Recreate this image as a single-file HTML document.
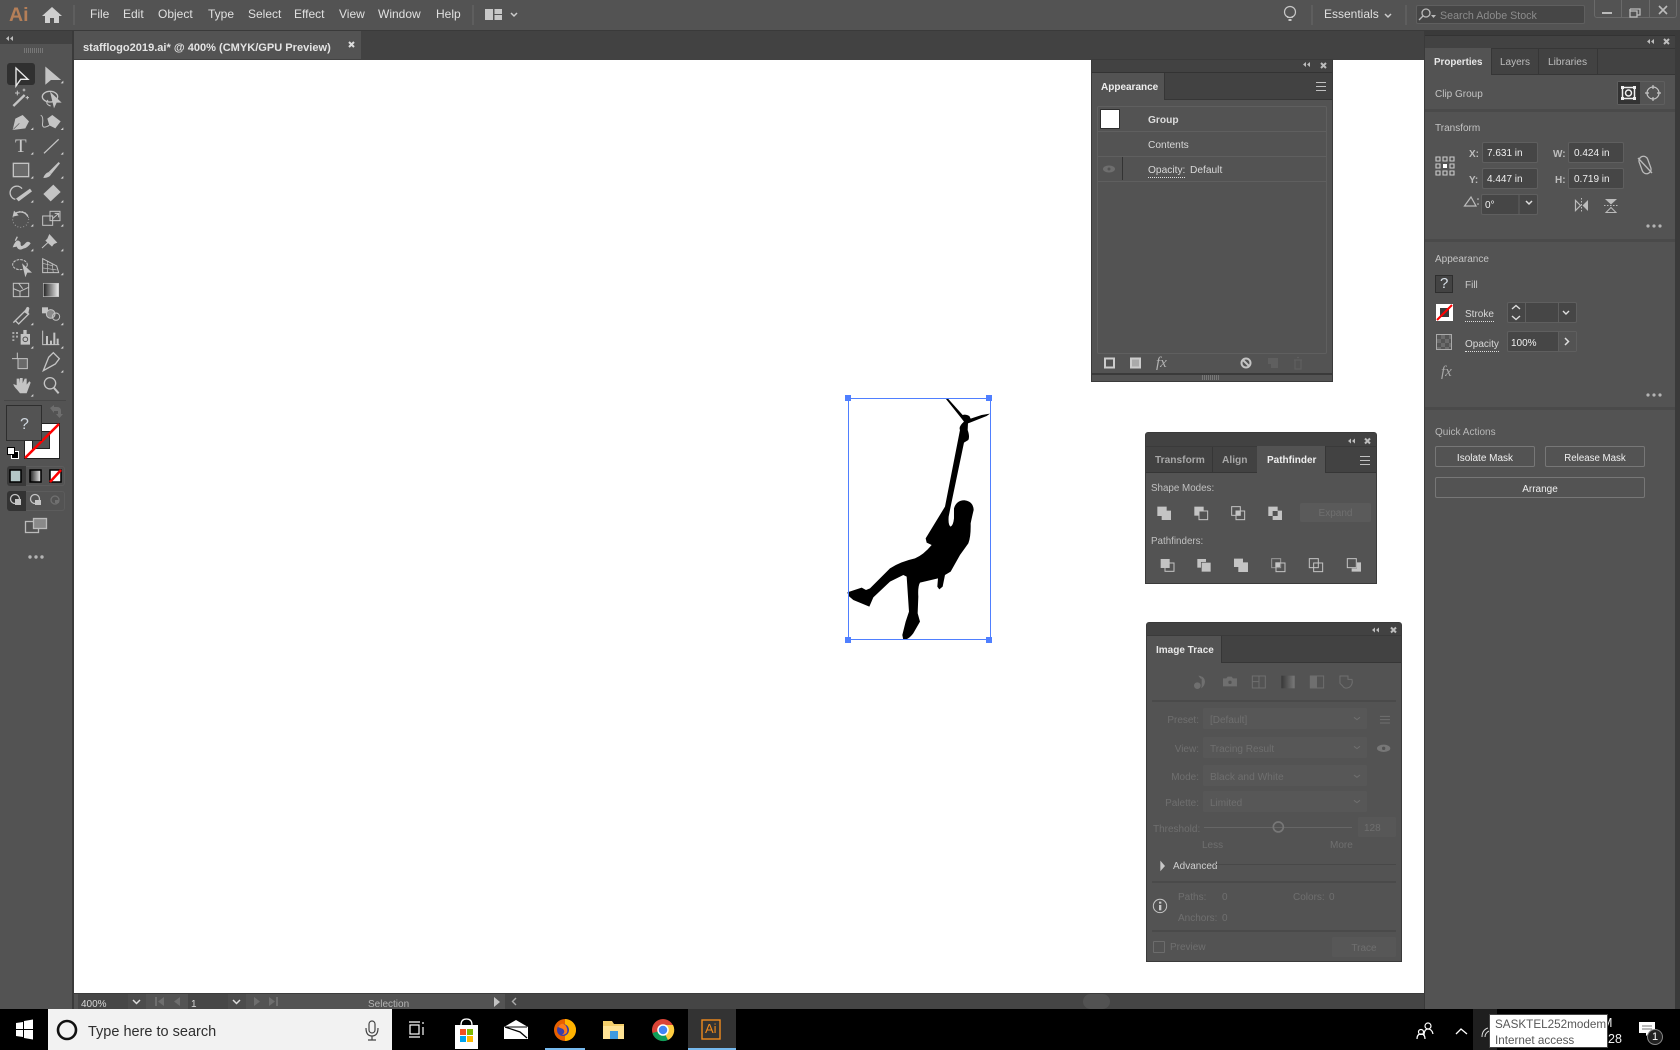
<!DOCTYPE html>
<html><head><meta charset="utf-8"><title>Illustrator</title>
<style>
html,body{margin:0;padding:0;width:1680px;height:1050px;overflow:hidden;background:#535353}
body{position:relative;font-family:"Liberation Sans",sans-serif}
.b{position:absolute;box-sizing:border-box}
.t{position:absolute;white-space:nowrap;font:10px/14px "Liberation Sans",sans-serif;color:#d8d8d8;margin-top:2px}
.w{color:#f0f0f0}.d{color:#b4b4b4}.g{color:#6f6f6f}.h{font-weight:bold}
.f{position:absolute;box-sizing:border-box;background:#464646;border:1px solid #5f5f5f;border-radius:2px}
.u{border-bottom:1px dotted #ddd;line-height:13px}
.dd{position:absolute;box-sizing:border-box;background:#575757;border-radius:1px}
.m{font-size:12px;color:#e0e0e0;margin-top:0}
svg{position:absolute;left:0;top:0}
</style></head><body>
<!-- top bar -->
<div class="b" style="left:0;top:0;width:1680px;height:30px;background:#535353"></div>
<div class="b" style="left:0;top:30px;width:1680px;height:979px;background:#3a3a3a"></div>
<div class="t h" style="left:9px;top:0;font-size:19.500px;line-height:26px;color:#b57f58">Ai</div>
<div class="b" style="left:73px;top:5px;width:2px;height:20px;background:#5e5e5e"></div>
<div class="b" style="left:472px;top:5px;width:2px;height:20px;background:#5e5e5e"></div>
<div class="t m" style="left:90px;top:7px">File</div>
<div class="t m" style="left:123px;top:7px">Edit</div>
<div class="t m" style="left:158px;top:7px">Object</div>
<div class="t m" style="left:208px;top:7px">Type</div>
<div class="t m" style="left:248px;top:7px">Select</div>
<div class="t m" style="left:294px;top:7px">Effect</div>
<div class="t m" style="left:339px;top:7px">View</div>
<div class="t m" style="left:378px;top:7px">Window</div>
<div class="t m" style="left:436px;top:7px">Help</div>
<div class="b" style="left:1311px;top:5px;width:2px;height:20px;background:#5e5e5e"></div>
<div class="b" style="left:1405px;top:5px;width:2px;height:20px;background:#5e5e5e"></div>
<div class="t m" style="left:1324px;top:7px">Essentials</div>
<div class="b" style="left:1416px;top:5px;width:169px;height:19px;background:#464646;border:1px solid #5f5f5f;border-radius:2px"></div>
<div class="t" style="left:1440px;top:7px;font-size:10.700px;color:#8c8c8c">Search Adobe Stock</div>
<div class="b" style="left:1594px;top:-1px;width:83px;height:19px;border:1px solid #6a6a6a;border-radius:0 0 3px 3px"></div>
<div class="b" style="left:1621px;top:0;width:1px;height:18px;background:#6a6a6a"></div>
<div class="b" style="left:1649px;top:0;width:1px;height:18px;background:#6a6a6a"></div>

<!-- document tab area -->
<div class="b" style="left:74px;top:31px;width:1350px;height:29px;background:#424242"></div>
<div class="b" style="left:74px;top:31px;width:287px;height:28px;background:#535353"></div>
<div class="t h" style="left:83px;top:39px;font-size:11.050px;color:#e4e4e4">stafflogo2019.ai* @ 400% (CMYK/GPU Preview)</div>

<!-- canvas -->
<div class="b" style="left:74px;top:60px;width:1350px;height:933px;background:#fff"></div>

<!-- status bar -->
<div class="b" style="left:74px;top:993px;width:1350px;height:16px;background:#535353;border-top:1px solid #3c3c3c"></div>
<div class="b" style="left:505px;top:994px;width:919px;height:15px;background:#454545"></div>
<div class="b" style="left:1083px;top:994px;width:27px;height:15px;border-radius:8px;background:#525252"></div>
<div class="b" style="left:78px;top:994px;width:50px;height:15px;background:#464646"></div>
<div class="b" style="left:128px;top:994px;width:18px;height:15px;background:#4c4c4c"></div>
<div class="b" style="left:188px;top:994px;width:40px;height:15px;background:#464646"></div>
<div class="b" style="left:228px;top:994px;width:18px;height:15px;background:#4c4c4c"></div>
<div class="t" style="left:81px;top:996px;font-size:10px;line-height:13px">400%</div>
<div class="t" style="left:191px;top:996px;font-size:10px;line-height:13px">1</div>
<div class="t d" style="left:368px;top:996px;font-size:10px;line-height:13px">Selection</div>

<!-- left tools panel -->
<div class="b" style="left:0;top:31px;width:72px;height:978px;background:#535353"></div>
<div class="b" style="left:0;top:31px;width:72px;height:13px;background:#424242"></div>
<div class="b" style="left:7px;top:63px;width:28px;height:22px;background:#303030;border-radius:3px"></div>
<div class="b" style="left:4px;top:400px;width:62px;height:1px;background:#474747"></div>
<div class="b" style="left:7px;top:466px;width:58px;height:20px;border:1px solid #5c5c5c;border-radius:3px"></div>
<div class="b" style="left:7px;top:466px;width:19px;height:20px;background:#3a3a3a;border-radius:3px 0 0 3px"></div>
<div class="b" style="left:7px;top:491px;width:58px;height:20px;border:1px solid #5c5c5c;border-radius:3px"></div>
<div class="b" style="left:7px;top:491px;width:19px;height:20px;background:#333;border-radius:3px 0 0 3px"></div>
<div class="t" style="left:15px;top:136px;font:19px/22px 'Liberation Serif',serif;color:#c8c8c8;margin:0">T</div>

<!-- stroke swatch / fill swatch -->
<div class="b" style="left:24px;top:423px;width:36px;height:36px;background:#fff;border:1px solid #222"></div>
<div class="b" style="left:32px;top:431px;width:18px;height:18px;background:#535353;border:1px solid #222"></div>
<svg width="1680" height="1050" viewBox="0 0 1680 1050" style="pointer-events:none"><line x1="25" y1="458" x2="59" y2="424" stroke="#f00" stroke-width="2.600"/></svg>
<div class="b" style="left:6px;top:405px;width:36px;height:36px;background:#535353;border:1px solid #2e2e2e"></div>
<div class="t" style="left:20px;top:415px;font-size:16px;line-height:16px;color:#d0d8e0">?</div>

<!-- right panel -->
<div class="b" style="left:1424px;top:35px;width:252px;height:974px;background:#535353;border-left:1px solid #3a3a3a;border-right:1px solid #3a3a3a"></div>
<div class="b" style="left:1425px;top:35px;width:250px;height:13px;background:#424242;border-top:1px solid #333"></div>
<div class="b" style="left:1425px;top:48px;width:250px;height:27px;background:#424242;border-top:1px solid #363636;border-bottom:1px solid #363636"></div>
<div class="b" style="left:1425px;top:48px;width:66px;height:27px;background:#535353"></div>
<div class="b" style="left:1491px;top:48px;width:1px;height:27px;background:#363636"></div>
<div class="b" style="left:1538px;top:48px;width:1px;height:27px;background:#363636"></div>
<div class="b" style="left:1597px;top:48px;width:1px;height:27px;background:#363636"></div>
<div class="t h" style="left:1434px;top:54px;color:#e8e8e8;font-size:9.800px">Properties</div>
<div class="t" style="left:1500px;top:54px;color:#bdbdbd">Layers</div>
<div class="t" style="left:1548px;top:54px;color:#bdbdbd;font-size:10.200px">Libraries</div>
<div class="t" style="left:1435px;top:86px;color:#c4c4c4">Clip Group</div>
<div class="b" style="left:1617px;top:81px;width:48px;height:24px;border:1px solid #5f5f5f;border-radius:2px"></div>
<div class="b" style="left:1618px;top:82px;width:22px;height:22px;background:#333"></div>
<div class="b" style="left:1425px;top:109px;width:250px;height:3px;background:#4a4a4a"></div>
<div class="t" style="left:1435px;top:120px;color:#c4c4c4">Transform</div>
<div class="t h" style="left:1469px;top:146px;color:#bdbdbd">X:</div>
<div class="t h" style="left:1469px;top:172px;color:#bdbdbd">Y:</div>
<div class="t h" style="left:1553px;top:146px;color:#bdbdbd">W:</div>
<div class="t h" style="left:1555px;top:172px;color:#bdbdbd">H:</div>
<div class="f" style="left:1482px;top:142px;width:56px;height:21px"></div>
<div class="f" style="left:1482px;top:168px;width:56px;height:21px"></div>
<div class="f" style="left:1568px;top:142px;width:56px;height:21px"></div>
<div class="f" style="left:1568px;top:168px;width:56px;height:21px"></div>
<div class="f" style="left:1481px;top:194px;width:57px;height:21px"></div>
<div class="b" style="left:1518px;top:195px;width:2px;height:19px;background:#535353"></div>
<div class="t w" style="left:1487px;top:145px">7.631 in</div>
<div class="t w" style="left:1487px;top:171px">4.447 in</div>
<div class="t w" style="left:1574px;top:145px">0.424 in</div>
<div class="t w" style="left:1574px;top:171px">0.719 in</div>
<div class="t w" style="left:1485px;top:197px">0°</div>
<div class="b" style="left:1425px;top:239px;width:250px;height:3px;background:#4a4a4a"></div>
<div class="t" style="left:1435px;top:251px;color:#c4c4c4">Appearance</div>
<div class="b" style="left:1435px;top:275px;width:18px;height:18px;background:#434343;border:1px solid #2e2e2e"></div>
<div class="t" style="left:1440px;top:274px;font-size:15px;line-height:16px;color:#d8e0e8">?</div>
<div class="t" style="left:1465px;top:277px;color:#c8c8c8">Fill</div>
<div class="t u" style="left:1465px;top:306px">Stroke</div>
<div class="t u" style="left:1465px;top:336px">Opacity</div>
<div class="b" style="left:1436px;top:304px;width:17px;height:17px;background:#fff"></div>
<div class="b" style="left:1440px;top:308px;width:9px;height:9px;background:#3a3a3a"></div>
<div class="f" style="left:1507px;top:302px;width:70px;height:21px"></div>
<div class="b" style="left:1525px;top:303px;width:1px;height:19px;background:#5f5f5f"></div>
<div class="b" style="left:1558px;top:303px;width:1px;height:19px;background:#5f5f5f"></div>
<div class="f" style="left:1507px;top:331px;width:70px;height:21px"></div>
<div class="b" style="left:1558px;top:332px;width:18px;height:19px;background:#535353;border-left:1px solid #5f5f5f"></div>
<div class="t w" style="left:1511px;top:335px">100%</div>
<div class="b" style="left:1436px;top:334px;width:16px;height:16px;background:repeating-conic-gradient(#6c6c6c 0 25%,#555 0 50%) 0 0/8px 8px;border:1px solid #aaa"></div>
<div class="t" style="left:1441px;top:364px;font:italic 15px/16px 'Liberation Serif',serif;color:#a8a8a8;margin:0">fx</div>
<div class="b" style="left:1425px;top:407px;width:250px;height:3px;background:#4a4a4a"></div>
<div class="t" style="left:1435px;top:424px;color:#b8b8b8">Quick Actions</div>
<div class="b" style="left:1435px;top:446px;width:100px;height:21px;border:1px solid #777;border-radius:2px"></div>
<div class="b" style="left:1545px;top:446px;width:100px;height:21px;border:1px solid #777;border-radius:2px"></div>
<div class="b" style="left:1435px;top:477px;width:210px;height:21px;border:1px solid #777;border-radius:2px"></div>
<div class="t w" style="left:1435px;top:450px;width:100px;text-align:center">Isolate Mask</div>
<div class="t w" style="left:1545px;top:450px;width:100px;text-align:center;font-size:9.700px">Release Mask</div>
<div class="t w" style="left:1435px;top:481px;width:210px;text-align:center">Arrange</div>

<!-- Appearance panel -->
<div class="b" style="left:1091px;top:59px;width:242px;height:323px;background:#535353;border:1px solid #3a3a3a"></div>
<div class="b" style="left:1092px;top:60px;width:240px;height:40px;background:#424242"></div>
<div class="b" style="left:1092px;top:72px;width:240px;height:1px;background:#333"></div>
<div class="b" style="left:1092px;top:73px;width:73px;height:27px;background:#535353;border-right:1px solid #363636"></div>
<div class="b" style="left:1165px;top:99px;width:167px;height:1px;background:#363636"></div>
<div class="t h" style="left:1101px;top:79px;color:#eee;font-size:10px">Appearance</div>
<div class="b" style="left:1097px;top:106px;width:230px;height:248px;border:1px solid #5f5f5f;border-radius:2px"></div>
<div class="b" style="left:1098px;top:131px;width:228px;height:1px;background:#5f5f5f"></div>
<div class="b" style="left:1098px;top:156px;width:228px;height:1px;background:#5f5f5f"></div>
<div class="b" style="left:1098px;top:181px;width:228px;height:1px;background:#5f5f5f"></div>
<div class="b" style="left:1100px;top:109px;width:20px;height:20px;background:#fff;border:1px solid #2e2e2e;border-radius:1px"></div>
<div class="b" style="left:1122px;top:157px;width:1px;height:23px;background:#333"></div>
<div class="t h" style="left:1148px;top:112px;font-size:10.200px;color:#ddd">Group</div>
<div class="t" style="left:1148px;top:137px;font-size:10.200px">Contents</div>
<div class="t u" style="left:1148px;top:162px;font-size:10.200px;">Opacity:</div>
<div class="t" style="left:1190px;top:162px;font-size:10.200px">Default</div>
<div class="t" style="left:1156px;top:355px;font:italic 15px/16px 'Liberation Serif',serif;color:#b4b4b4;margin:0">fx</div>
<div class="b" style="left:1092px;top:373px;width:240px;height:2px;background:#3a3a3a"></div>

<!-- Pathfinder panel -->
<div class="b" style="left:1145px;top:432px;width:232px;height:152px;background:#535353;border:1px solid #3a3a3a;border-radius:3px 3px 0 0"></div>
<div class="b" style="left:1146px;top:433px;width:230px;height:40px;background:#424242;border-radius:2px 2px 0 0"></div>
<div class="b" style="left:1146px;top:446px;width:230px;height:1px;background:#3a3a3a"></div>
<div class="b" style="left:1146px;top:472px;width:230px;height:1px;background:#363636"></div>
<div class="b" style="left:1212px;top:447px;width:1px;height:26px;background:#363636"></div>
<div class="b" style="left:1257px;top:446px;width:69px;height:27px;background:#535353;border-right:1px solid #363636"></div>
<div class="t h" style="left:1155px;top:452px;font-size:10.200px;color:#a8a8a8">Transform</div>
<div class="t h" style="left:1222px;top:452px;font-size:10.200px;color:#a8a8a8">Align</div>
<div class="t h" style="left:1267px;top:452px;font-size:10px;color:#eee">Pathfinder</div>
<div class="t" style="left:1151px;top:480px;font-size:9.800px;color:#c0c0c0">Shape Modes:</div>
<div class="t" style="left:1151px;top:533px;font-size:9.800px;color:#c0c0c0">Pathfinders:</div>
<div class="b" style="left:1300px;top:503px;width:71px;height:19px;background:#5a5a5a;border-radius:2px"></div>
<div class="t g" style="left:1300px;top:505px;width:71px;text-align:center;font-size:10px">Expand</div>

<!-- Image Trace panel -->
<div class="b" style="left:1146px;top:622px;width:256px;height:340px;background:#535353;border:1px solid #3a3a3a;border-radius:3px 3px 0 0"></div>
<div class="b" style="left:1147px;top:623px;width:254px;height:40px;background:#424242;border-radius:2px 2px 0 0"></div>
<div class="b" style="left:1147px;top:635px;width:254px;height:1px;background:#3a3a3a"></div>
<div class="b" style="left:1147px;top:636px;width:75px;height:27px;background:#535353;border-right:1px solid #363636"></div>
<div class="b" style="left:1222px;top:662px;width:179px;height:1px;background:#363636"></div>
<div class="t h" style="left:1156px;top:642px;font-size:10px;color:#e8e8e8">Image Trace</div>
<div class="b" style="left:1152px;top:700px;width:244px;height:2px;background:#4a4a4a"></div>
<div class="dd" style="left:1203px;top:708px;width:164px;height:21px"></div>
<div class="dd" style="left:1203px;top:737px;width:164px;height:21px"></div>
<div class="dd" style="left:1203px;top:765px;width:164px;height:21px"></div>
<div class="dd" style="left:1203px;top:791px;width:164px;height:21px"></div>
<div class="t g" style="right:481px;top:712px">Preset:</div>
<div class="t g" style="right:481px;top:741px">View:</div>
<div class="t g" style="right:481px;top:769px">Mode:</div>
<div class="t g" style="right:481px;top:795px">Palette:</div>
<div class="t g" style="left:1210px;top:712px;">[Default]</div>
<div class="t g" style="left:1210px;top:741px;">Tracing Result</div>
<div class="t g" style="left:1210px;top:769px;font-size:10.200px">Black and White</div>
<div class="t g" style="left:1210px;top:795px;">Limited</div>
<div class="t g" style="left:1153px;top:821px;">Threshold:</div>
<div class="b" style="left:1204px;top:827px;width:148px;height:1px;background:#666"></div>
<div class="dd" style="left:1358px;top:817px;width:38px;height:20px"></div>
<div class="t g" style="left:1364px;top:820px;">128</div>
<div class="t g" style="left:1202px;top:837px;">Less</div>
<div class="t g" style="left:1330px;top:837px;">More</div>
<div class="t" style="left:1173px;top:858px;color:#cfcfcf">Advanced</div>
<div class="b" style="left:1216px;top:864px;width:180px;height:1px;background:#484848"></div>
<div class="b" style="left:1152px;top:881px;width:244px;height:2px;background:#4a4a4a"></div>
<div class="t g" style="left:1178px;top:889px;">Paths:</div>
<div class="t g" style="left:1222px;top:889px;">0</div>
<div class="t g" style="left:1293px;top:889px;">Colors:</div>
<div class="t g" style="left:1329px;top:889px;">0</div>
<div class="t g" style="left:1178px;top:910px;">Anchors:</div>
<div class="t g" style="left:1222px;top:910px;">0</div>
<div class="b" style="left:1152px;top:930px;width:244px;height:2px;background:#4a4a4a"></div>
<div class="b" style="left:1153px;top:941px;width:12px;height:12px;border:1px solid #6c6c6c;border-radius:1px"></div>
<div class="t g" style="left:1170px;top:939px;">Preview</div>
<div class="dd" style="left:1332px;top:937px;width:64px;height:20px"></div>
<div class="t g" style="left:1332px;top:940px;width:64px;text-align:center;">Trace</div>

<!-- taskbar -->
<div class="b" style="left:0;top:1009px;width:1680px;height:41px;background:#000"></div>
<div class="b" style="left:48px;top:1009px;width:344px;height:41px;background:#f2f2f2"></div>
<div class="t" style="left:88px;top:1021px;font-size:14.500px;line-height:18px;color:#2f2f2f">Type here to search</div>
<div class="b" style="left:688px;top:1009px;width:48px;height:41px;background:#333"></div>
<div class="b" style="left:545px;top:1048px;width:40px;height:2px;background:#76b9ed"></div>
<div class="b" style="left:688px;top:1048px;width:48px;height:2px;background:#76b9ed"></div>
<div class="b" style="left:1473px;top:1009px;width:24px;height:41px;background:#1f1f1f"></div>
<div class="t w" style="left:1602px;top:1013px;font-size:12.500px;line-height:16px">M</div>
<div class="t w" style="left:1608px;top:1029px;font-size:12.500px;line-height:16px">28</div>
<div class="b" style="left:1489px;top:1014px;width:119px;height:34px;background:#fff;border:1px solid #444"></div>
<div class="t" style="left:1495px;top:1015px;font-size:11.700px;line-height:15px;color:#575757">SASKTEL252modem</div>
<div class="t" style="left:1495px;top:1031px;font-size:11.700px;line-height:15px;color:#575757">Internet access</div>
<div class="t" style="left:705px;top:1020px;font-size:13px;line-height:18px;color:#f08a1d;margin:0">Ai</div>

<!-- icon overlay -->
<svg width="1680" height="1050" viewBox="0 0 1680 1050">
<defs><linearGradient id="gr"><stop offset="0" stop-color="#222"/><stop offset="1" stop-color="#eee"/></linearGradient>
<linearGradient id="gr2"><stop offset="0" stop-color="#383838"/><stop offset="1" stop-color="#7a7a7a"/></linearGradient></defs>
<!-- top bar icons -->
<path d="M52 7l-10 9h3v7h5v-5h4v5h5v-7h3z" fill="#cfcfcf"/>
<path d="M485 9h8v11h-8zM494.500 9h7.500v5h-7.500zM494.500 15h7.500v5h-7.500z" fill="#c8c8c8"/>
<path d="M511 13l3 3 3-3" fill="none" stroke="#ccc" stroke-width="1.500"/>
<path d="M349 42l5 5M354 42l-5 5" stroke="#ddd" stroke-width="2"/>
<g fill="none" stroke="#c8c8c8" stroke-width="1.200"><circle cx="1290" cy="12" r="5.500"/><path d="M1288 18l-.5-2M1292 18l.5-2"/><path d="M1288.500 20h3" stroke-width="2"/></g>
<path d="M1385 14l3 3 3-3" fill="none" stroke="#ccc" stroke-width="1.500"/>
<g fill="none" stroke="#bbb" stroke-width="1.300"><circle cx="1426" cy="13" r="4"/><path d="M1423 16l-4 4"/></g><path d="M1431 15h5l-2.500 3z" fill="#bbb"/>
<path d="M1602 12h10v2h-10z" fill="#bbb"/>
<g fill="none" stroke="#bbb" stroke-width="1.300"><path d="M1630 9h10v6h-3M1630 9v2"/><rect x="1630" y="11" width="7" height="6"/></g>
<path d="M1659 6l8 8M1667 6l-8 8" stroke="#bbb" stroke-width="1.600"/>

<!-- panel collapse & close glyphs -->
<g fill="#bdbdbd">
<path d="M9 36l-3 2.500 3 2.500zM13 36l-3 2.500 3 2.500z"/>
<path d="M1306 62l-3 2.500 3 2.500zM1310 62l-3 2.500 3 2.500z"/>
<path d="M1351 438.500l-3 2.500 3 2.500zM1355 438.500l-3 2.500 3 2.500z"/>
<path d="M1375 627.500l-3 2.500 3 2.500zM1379 627.500l-3 2.500 3 2.500z"/>
<path d="M1650 39l-3 2.500 3 2.500zM1654 39l-3 2.500 3 2.500z"/>
</g>
<g stroke="#bdbdbd" stroke-width="2" fill="none">
<path d="M1321 63l5 5M1326 63l-5 5"/><path d="M1365 438.500l5 5M1370 438.500l-5 5"/><path d="M1391 627.500l5 5M1396 627.500l-5 5"/><path d="M1664 39l5 5M1669 39l-5 5"/>
</g>
<g stroke="#c0c0c0" stroke-width="1"><path d="M1316 82.500h10M1316 86.500h10M1316 90.500h10"/><path d="M1360 456.500h10M1360 460.500h10M1360 464.500h10"/></g>
<path d="M24.500 48v5M26.500 48v5M28.500 48v5M30.500 48v5M32.500 48v5M34.500 48v5M36.500 48v5M38.500 48v5M40.500 48v5M42.500 48v5" stroke="#777" stroke-width="1"/>
<path d="M1202.500 375v5M1204.500 375v5M1206.500 375v5M1208.500 375v5M1210.500 375v5M1212.500 375v5M1214.500 375v5M1216.500 375v5M1218.500 375v5" stroke="#777"/>

<!-- TOOLBOX in zoom coordinates -->
<g transform="translate(0,50) scale(.3333)" fill="none" stroke="#c4c4c4" stroke-width="4">
<path d="M48 54V108L62 88H84Z" stroke="#ececec"/>
<path d="M138 54V100L152 88H178Z" fill="#c4c4c4"/>
<path d="M40 168L74 135" stroke-width="7"/><path d="M52 122v14M45 129h14M82 138v10M77 143h10M72 116v8M68 120h8" stroke-width="3"/>
<ellipse cx="150" cy="140" rx="23" ry="16"/><path d="M152 168q-18-6-8-18" stroke-width="3"/><path d="M150 125L185 158H170L162 175Z" fill="#c4c4c4" stroke="none"/>
<path d="M38 240L46 206L68 195L87 214L76 235Z" fill="#c4c4c4" stroke="none"/><path d="M40 238L58 220" stroke="#535353" stroke-width="2"/>
<path d="M142 206L157 195L182 214L166 235L148 226Z" fill="#c4c4c4" stroke="none"/><path d="M148 226Q124 240 128 218Q130 198 122 196" stroke-width="3"/>
<path d="M132 310L176 268" stroke-width="4"/>
<rect x="40" y="340" width="46" height="40" fill="#6a6a6a"/>
<path d="M176 336L146 366L154 372L180 340Z" fill="#c4c4c4" stroke="none"/><path d="M146 366Q134 370 130 384Q148 384 154 372Z" fill="#c4c4c4" stroke="none"/>
<path d="M66 416A20 20 0 1 0 46 448" stroke-width="4"/><path d="M48 446L90 416L96 424L56 454Z" fill="#c4c4c4" stroke="none"/>
<path d="M130 432L160 404L182 426L152 454Z" fill="#c4c4c4" stroke="none"/>
<path d="M40 498A25 25 0 0 1 84 500" stroke-width="4"/><path d="M42 482L38 500L56 496Z" fill="#c4c4c4" stroke="none"/><circle cx="62" cy="508" r="24" stroke-dasharray="2 7" stroke-width="3"/>
<rect x="128" y="498" width="30" height="28" stroke-width="3"/><rect x="150" y="484" width="30" height="28" stroke-width="3" fill="none"/><path d="M158 506L176 490M164 490h12v12" stroke-width="3"/>
<path d="M38 592Q50 560 62 578Q60 596 74 582Q84 570 92 580Q82 594 70 596Q56 604 50 590" fill="#c4c4c4" stroke="none"/><path d="M52 560l-6 12" stroke-width="4"/>
<path d="M126 594L150 572" stroke-width="3"/><path d="M148 552L172 578L162 582L156 590L136 572L142 566Z" fill="#c4c4c4" stroke="none"/>
<ellipse cx="60" cy="644" rx="22" ry="15" stroke-width="3" stroke-dasharray="8 3"/><path d="M66 640L96 668H82L76 682Z" fill="#c4c4c4" stroke="none"/>
<path d="M128 626L170 648L176 668H128Z" stroke-width="3"/><path d="M128 640L160 648M128 654L170 660M142 632V668M156 640L160 668" stroke-width="2"/>
<rect x="40" y="700" width="46" height="40" stroke-width="3"/><path d="M40 716L60 724L86 712M60 724L60 740M56 700L68 716" stroke-width="3"/>
<rect x="130" y="700" width="46" height="40" fill="url(#gr)" stroke-width="2"/>
<path d="M46 812L40 818M46 812L76 782L86 792L56 822Z" stroke-width="4"/><path d="M72 786L80 772Q86 768 88 776L84 794Z" fill="#c4c4c4" stroke="none"/>
<rect x="126" y="772" width="18" height="18" fill="#c4c4c4" stroke="none"/><circle cx="152" cy="792" r="13" fill="#8a8a8a" stroke-width="3"/><circle cx="168" cy="800" r="11" stroke-width="3"/>
<path d="M37 846h6v6h-6zM48 846h6v6h-6zM37 857h6v6h-6zM48 857h6v6h-6zM37 868h6v5h-6z" fill="#aaa" stroke="none"/>
<rect x="62" y="852" width="28" height="32" fill="#c4c4c4" stroke="none"/><rect x="70" y="840" width="10" height="12" fill="#c4c4c4" stroke="none"/><circle cx="76" cy="868" r="7" stroke="#535353" stroke-width="3"/>
<path d="M128 842V884H178" stroke-width="3"/><path d="M138 858h6v26h-6zM150 872h6v12h-6zM160 848h6v36h-6zM170 866h6v18h-6z" fill="#c4c4c4" stroke="none"/>
<path d="M36 926H54M52 908V926" stroke-width="3"/><path d="M54 926H82V956H54Z" fill="#6a6a6a" stroke-width="3"/>
<path d="M130 962L146 922L160 908L178 926L166 942Z" stroke-width="4"/>
<path d="M52 1020Q40 1008 40 1002L50 1006L50 986H58V1000L60 984H68V1000L74 986H80V1004L88 994L92 998L80 1030H60Z" fill="#c4c4c4" stroke="none"/>
<circle cx="150" cy="1000" r="17" stroke-width="4"/><path d="M162 1014L176 1030" stroke-width="6"/>
<g fill="#d0d0d0" stroke="none">
<path d="M190 92v8h-8zM100 232v8h-8zM190 232v8h-8zM100 306v8h-8zM190 306v8h-8zM100 378v8h-8zM190 378v8h-8zM100 450v8h-8zM190 450v8h-8zM100 522v8h-8zM190 522v8h-8zM100 596v8h-8zM190 596v8h-8zM190 668v8h-8zM100 818v8h-8zM190 818v8h-8zM100 888v8h-8zM190 888v8h-8zM190 960v8h-8zM100 1032v8h-8z"/>
</g>
</g>
<!-- swap arrow, default colors -->
<path transform="translate(-2,-4)" d="M52 412l4-3v2h3q4 0 4 4v3h2l-3.500 4-3.500-4h2v-3h-4v2z" fill="#6e6e6e"/>
<rect x="11.500" y="451.500" width="7" height="7" fill="#000" stroke="#fff"/><rect x="7.500" y="447.500" width="7" height="7" fill="#fff" stroke="#000"/>
<!-- mode swatches -->
<rect x="10" y="470" width="11" height="12" fill="#b4c8c8" stroke="#000" stroke-width="1.500"/>
<rect x="30" y="470" width="11" height="12" fill="url(#gr)" stroke="#000" stroke-width="1.500"/>
<rect x="50" y="470" width="11" height="12" fill="#fff" stroke="#000" stroke-width="1.500"/><path d="M50 482L61 470" stroke="#f00" stroke-width="2.500"/>
<!-- draw modes -->
<g stroke="#c4c4c4" stroke-width="1.300" fill="none"><circle cx="15" cy="499" r="4.500"/><circle cx="35" cy="499" r="4.500"/></g>
<rect x="15" y="499" width="6" height="6" fill="#c4c4c4"/><rect x="35" y="500" width="6" height="5" fill="#c4c4c4"/>
<circle cx="55" cy="500" r="4" fill="none" stroke="#707070" stroke-width="1.300"/><path d="M55 500h4v3h-4z" fill="#707070"/>
<!-- screen mode -->
<g stroke="#bbb" stroke-width="1.300"><rect x="25.500" y="521.500" width="13" height="11" fill="none"/><rect x="33.500" y="518.500" width="13" height="10" fill="#8a8a8a"/></g>
<g fill="#b4b4b4"><circle cx="30" cy="557" r="1.700"/><circle cx="36" cy="557" r="1.700"/><circle cx="42" cy="557" r="1.700"/>
<circle cx="1648" cy="226" r="1.600"/><circle cx="1654" cy="226" r="1.600"/><circle cx="1660" cy="226" r="1.600"/>
<circle cx="1648" cy="395" r="1.600"/><circle cx="1654" cy="395" r="1.600"/><circle cx="1660" cy="395" r="1.600"/></g>

<!-- properties icons -->
<g stroke="#eee" fill="none" stroke-width="1.500"><rect x="1622.500" y="87.500" width="12" height="11"/><circle cx="1628.500" cy="93" r="3"/></g>
<path d="M1621 86h3v3h-3zM1633 86h3v3h-3zM1621 97h3v3h-3zM1633 97h3v3h-3z" fill="#eee"/>
<g stroke="#c4c4c4" fill="none" stroke-width="1.200"><circle cx="1653" cy="93" r="6"/><path d="M1653 85v4M1653 97v4M1645 93h4M1657 93h4"/></g>
<g stroke="#ccc" fill="none" stroke-width="1.100"><path d="M1436 157h4v4h-4zM1443 157h4v4h-4zM1450 157h4v4h-4zM1436 164h4v4h-4zM1450 164h4v4h-4zM1436 171h4v4h-4zM1443 171h4v4h-4zM1450 171h4v4h-4z"/></g>
<rect x="1443" y="164" width="4" height="4" fill="#fff"/>
<g stroke="#bbb" fill="none" stroke-width="1.300"><rect x="1640.500" y="156" width="9" height="18" rx="4.500" transform="rotate(-20 1645 165)"/><path d="M1638 158l14 15"/></g>
<path d="M1464.500 206l6.500-9 5 9z" fill="none" stroke="#bbb" stroke-width="1.200"/>
<circle cx="1478" cy="199" r=".8" fill="#ccc"/><circle cx="1478" cy="204" r=".8" fill="#ccc"/>
<path d="M1526 201l3 3 3-3" fill="none" stroke="#ddd" stroke-width="1.500"/>
<path d="M1575.500 200.500v10l5-5z" fill="none" stroke="#bbb" stroke-width="1.200"/>
<path d="M1588 200v11l-5.500-5.500z" fill="#bbb"/>
<path d="M1581.500 198v15" stroke="#bbb" stroke-dasharray="1.500 1.500"/>
<path d="M1605 199h12l-6 5.500z" fill="#bbb"/><path d="M1606 212.500h10l-5-5z" fill="none" stroke="#bbb"/><path d="M1604 205.500h14" stroke="#bbb" stroke-dasharray="1.500 1.500"/>
<line x1="1437" y1="320" x2="1452" y2="305" stroke="#f00" stroke-width="2"/>
<path d="M1512 309l4-3.500 4 3.500M1512 316l4 3.500 4-3.500M1563 311l3 3 3-3" fill="none" stroke="#ddd" stroke-width="1.400"/>
<path d="M1565 338l3.500 3.500-3.500 3.500" fill="none" stroke="#ddd" stroke-width="1.500"/>

<!-- appearance panel icons -->
<g fill="#6e6e6e"><ellipse cx="1109" cy="169" rx="6" ry="3.500"/></g><circle cx="1109" cy="169" r="1.500" fill="#535353"/>
<rect x="1105" y="358.500" width="9" height="9" fill="none" stroke="#ccc" stroke-width="2"/>
<rect x="1131" y="358.500" width="9" height="9" fill="#aaa" stroke="#ccc" stroke-width="2" />
<circle cx="1246" cy="363" r="4.500" fill="none" stroke="#c4c4c4" stroke-width="2"/><path d="M1243 360l6 6" stroke="#c4c4c4" stroke-width="2"/>
<path d="M1268 358h10v10h-7v-4h-3z" fill="#5f5f5f"/>
<g fill="none" stroke="#5f5f5f" stroke-width="1.200"><path d="M1294 360h8M1295 360v9h6v-9M1297 357.500h2"/></g>

<!-- pathfinder icons -->
<g transform="translate(1140,425) scale(.3333)">
<g fill="#c4c4c4">
<path d="M52 245h28v12h13v28h-28v-12h-13z"/>
<rect x="163" y="245" width="28" height="27"/><rect x="177" y="258" width="26" height="26" fill="#535353" stroke="#c4c4c4" stroke-width="3"/>
<rect x="275" y="245" width="26" height="26" fill="none" stroke="#c4c4c4" stroke-width="3"/><rect x="288" y="258" width="26" height="26" fill="none" stroke="#c4c4c4" stroke-width="3"/><rect x="288" y="258" width="13" height="13"/>
<path d="M385 245h28v12h13v28h-28v-12h-13zM398 258v15h15v-15z" fill-rule="evenodd"/>
<rect x="62" y="402" width="27" height="27"/><rect x="75" y="414" width="27" height="25" fill="none" stroke="#c4c4c4" stroke-width="3"/>
<rect x="172" y="402" width="26" height="26"/><rect x="184" y="412" width="29" height="29" stroke="#535353" stroke-width="2"/>
<path d="M282 401h27v11h15v29h-29v-15h-13z"/>
<rect x="395" y="401" width="27" height="27" fill="none" stroke="#999" stroke-width="3"/><rect x="408" y="414" width="27" height="26" fill="none" stroke="#c4c4c4" stroke-width="3"/><rect x="406" y="412" width="14" height="14"/>
<rect x="508" y="401" width="27" height="27" fill="none" stroke="#c4c4c4" stroke-width="3"/><rect x="521" y="414" width="27" height="26" fill="none" stroke="#c4c4c4" stroke-width="3"/>
<rect x="622" y="401" width="27" height="27" fill="none" stroke="#c4c4c4" stroke-width="3"/><path d="M651 412h12v28h-28v-10h16z"/>
</g></g>

<!-- image trace icons -->
<g transform="translate(1140,615) scale(.3333)">
<g fill="#6f6f6f" stroke="none">
<path d="M175 182a20 20 0 0 1 8 38l4-10a12 12 0 0 0-6-20z"/><circle cx="172" cy="212" r="10"/>
<path d="M185 184a18 18 0 0 1 0 32z"/>
<path d="M249 190h10l4-5h12l4 5h12v24h-42z"/>
<rect x="424" y="182" width="40" height="38" fill="url(#gr2)"/>
<path d="M511 182h20v38h-20z"/>
</g>
<circle cx="270" cy="202" r="5" fill="#535353"/>
<g fill="none" stroke="#6f6f6f" stroke-width="3">
<rect x="337" y="183" width="39" height="36"/><path d="M337 200h20M357 183v36"/>
<rect x="511" y="183" width="40" height="36"/>
<path d="M600 183h24v10h12q4 15-8 24-14 6-20-4l-8-8z"/>
<path d="M642 307l9 7 9-7M642 394l9 7 9-7M642 480l9 7 9-7M642 556l9 7 9-7"/>
<path d="M720 304h30M720 314h30M720 324h30"/>
<circle cx="415" cy="636" r="15" stroke-width="5" stroke="#777"/>
</g>
<ellipse cx="731" cy="400" rx="20" ry="11" fill="#777"/><circle cx="731" cy="400" r="5" fill="#535353"/>
<path d="M61 737v32l14-16z" fill="#c8c8c8"/>
<circle cx="60" cy="873" r="20" fill="none" stroke="#c8c8c8" stroke-width="3"/>
<rect x="57" y="870" width="7" height="16" fill="#c8c8c8"/><rect x="57" y="860" width="7" height="6" fill="#c8c8c8"/>
</g>

<!-- silhouette -->
<g transform="translate(840,390) scale(.3333)">
<path d="M318 27L325 27L368 75Q378 72 388 78L392 86L425 75L450 71L440 78L392 97L384 100L383 120Q390 140 385 150L372 158L333 345L326 380Q324 405 332 410Q340 405 342 385L342 355Q350 330 375 331Q400 335 401 360Q395 385 392 400Q393 440 385 460L360 495L332 545L315 555L308 590L298 598L292 590L294 565L240 578Q233 590 235 620L233 670L240 695L220 730Q205 750 190 750L187 735L197 695L207 665L200 560L190 555L150 575L100 622L88 650L40 630L26 618L22 607L65 593L78 600L90 595L150 535Q180 515 225 505Q250 495 275 465L260 458L257 445L315 350L360 120Q355 110 372 95L362 82Z" fill="#000"/>
</g>
<rect x="848.500" y="398.500" width="142" height="241" fill="none" stroke="#4f7fff" stroke-width="1"/>
<g fill="#4f7fff"><rect x="845" y="395" width="6" height="6"/><rect x="986" y="395" width="6" height="6"/><rect x="845" y="637" width="6" height="6"/><rect x="986" y="637" width="6" height="6"/></g>

<!-- status bar icons -->
<g fill="#6e6e6e"><path d="M155 997h2v9h-2zM164 997v9l-6-4.500zM180 997v9l-6-4.500zM254 997v9l6-4.500zM269 997v9l6-4.500zM276 997h2v9h-2z"/></g>
<path d="M133 1000l3.500 3.500 3.500-3.500M233 1000l3.500 3.500 3.500-3.500" fill="none" stroke="#ddd" stroke-width="1.500"/>
<path d="M494 997v10l6-5z" fill="#c4c4c4"/><path d="M516 998l-3.500 3.500 3.500 3.500" fill="none" stroke="#aaa" stroke-width="1.400"/>

<!-- taskbar icons -->
<path d="M16 1023l7-1v7h-7zM24 1021l9-1.500v9.500h-9zM16 1030h7v7l-7-1zM24 1030h9v9.500l-9-1.500z" fill="#fff"/>
<circle cx="67" cy="1030" r="9" fill="none" stroke="#111" stroke-width="2.600"/>
<g fill="none" stroke="#444" stroke-width="1.200"><rect x="369" y="1021" width="6" height="12" rx="3"/><path d="M366 1028q0 8 6 8t6-8M372 1036v4M368 1040h8"/></g>
<g fill="none" stroke="#fff" stroke-width="1.200"><rect x="410" y="1025" width="9" height="9"/><path d="M409 1022h11M409 1037h11M423 1022v2M423 1027v8"/></g>
<path d="M455 1025h23v24h-23z" fill="#fff"/><path d="M461 1025q0-6 5.500-6t5.500 6" fill="none" stroke="#fff" stroke-width="1.300"/>
<rect x="460" y="1029" width="6" height="6" fill="#f25022"/><rect x="467" y="1029" width="6" height="6" fill="#7fba00"/><rect x="460" y="1036" width="6" height="6" fill="#00a4ef"/><rect x="467" y="1036" width="6" height="6" fill="#ffb900"/>
<path d="M504 1027l12-7 12 7v12h-24z" fill="#fff"/><path d="M505 1027l15 5 7 6" fill="none" stroke="#000" stroke-width="1.300"/><path d="M505 1027h22" stroke="#000" stroke-width="1"/>
<circle cx="565" cy="1030" r="11" fill="#e66000"/><path d="M565 1019a11 11 0 0 1 0 22z" fill="#ffb300"/><circle cx="563" cy="1030" r="6" fill="#3a3fa8"/><path d="M558 1027q4-6 8-1 4 8-4 9q4-3 1-6z" fill="#ff7a18"/>
<path d="M603 1021h9l2 3h10v13h-21z" fill="#f4cf6b"/><rect x="603" y="1026" width="21" height="13" fill="#ffe395"/><rect x="610" y="1031" width="8" height="8" fill="#3d9ae0"/>
<circle cx="663" cy="1030" r="11" fill="#db4437"/><path d="M663 1030L652.500 1033A11 11 0 0 0 668 1040Z" fill="#0f9d58"/><path d="M663 1030L668 1040A11 11 0 0 0 673 1025L663 1025Z" fill="#ffcd40"/><circle cx="663" cy="1030" r="5" fill="#4285f4" stroke="#fff" stroke-width="1.500"/>
<rect x="702" y="1020" width="18" height="19" fill="none" stroke="#f08a1d" stroke-width="1.400"/>
<g fill="none" stroke="#fff" stroke-width="1.200" transform="translate(-2,0)"><circle cx="1430" cy="1026" r="3"/><path d="M1426 1036q0-7 4-7t5 5"/><circle cx="1423" cy="1032" r="2.500"/><path d="M1419 1039q0-5 4-5t4 5"/></g>
<path d="M1456 1034l5-5 6 5" fill="none" stroke="#fff" stroke-width="1.300"/>
<g fill="none" stroke="#ddd" stroke-width="1"><path d="M1482 1037q0-7 6-9"/><path d="M1485 1037q0-4 4-6"/></g>
<path d="M1639 1022h16v11h-5l-4 3v-3h-7z" fill="#fff"/><path d="M1642 1026h10M1642 1029h10" stroke="#777"/>
<circle cx="1655" cy="1037" r="7.500" fill="#222" stroke="#888"/>
</svg>
<div class="t" style="left:1652px;top:1030px;font-size:11px;color:#fff;margin:0">1</div>
</body></html>
